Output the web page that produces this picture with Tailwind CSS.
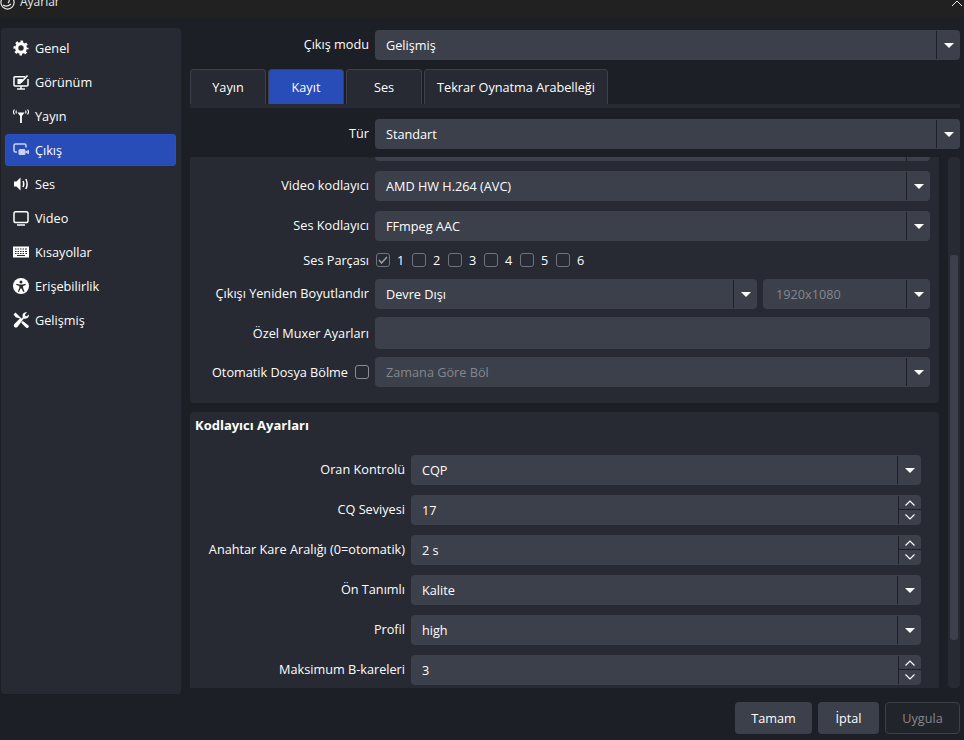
<!DOCTYPE html>
<html lang="tr">
<head>
<meta charset="UTF-8">
<title>Ayarlar</title>
<script src="https://cdn.jsdelivr.net/npm/@tailwindcss/browser@4"></script>
</head>
<body class="w-[964px] h-[740px] overflow-hidden bg-[#1d1f26] text-[#fefefe] font-['Open_Sans',sans-serif] text-[12.7px] leading-[18px]">

<!-- Title bar -->
<div class="h-[17px] bg-[#212121] flex items-start justify-between overflow-hidden pr-[2px]">
	<div class="flex items-center gap-[5px] h-[16px] -mt-[6px] shrink-0 text-[#e8e8e8] text-[12px]">
		<svg width="15" height="15" viewBox="0 0 15 15" fill="none" stroke="#e8e8e8" stroke-width="1.200"><circle cx="7.500" cy="7.500" r="6.600"/><path d="M6 1c4 2 4 5 2 7M3 10c2 1.500 5 1.500 8-1"/></svg>
		<span>Ayarlar</span>
	</div>
	<svg class="shrink-0" width="10" height="6" viewBox="0 0 10 6" fill="none" stroke="#e8e8e8" stroke-width="1"><path d="M0 6 5 1l5 5"/></svg>
</div>

<div class="flex h-[723px]">
	<!-- Sidebar -->
	<nav class="ml-[1px] mt-[11px] w-[180px] h-[666px] bg-[#272a33] rounded-[4px] pt-[4px] pl-[4px] pr-[5px] flex flex-col gap-[2px] shrink-0">
		<a class="h-[32px] pl-[8px] flex items-center gap-[6px] rounded-[3px]">
			<svg class="w-[16px] h-[16px] shrink-0" viewBox="0 0 16 16" fill="none" stroke="#fff"><circle cx="8" cy="8" r="4.300" stroke-width="3.200"/><circle cx="8" cy="8" r="6.400" stroke-width="2.200" stroke-dasharray="2.500 2.530" stroke-dashoffset="1.250"/></svg>
			<span>Genel</span>
		</a>
		<a class="h-[32px] pl-[8px] flex items-center gap-[6px] rounded-[3px]">
			<svg class="w-[16px] h-[16px] shrink-0" viewBox="0 0 16 16" fill="none" stroke="#fff" stroke-width="1.500"><path d="M12 2.800H2a1 1 0 0 0-1 1V11a1 1 0 0 0 1 1h12a1 1 0 0 0 1-1V5"/><path d="M4 15h8" stroke-width="1.400"/><path d="M8 12v3" stroke-width="1.400"/><path d="M4.500 5h5.500L7.500 10h-3z" fill="#fff" stroke="none"/><path d="M8 8.500 14.500 1.500" stroke-width="1.600"/></svg>
			<span>Görünüm</span>
		</a>
		<a class="h-[32px] pl-[8px] flex items-center gap-[6px] rounded-[3px]">
			<svg class="w-[16px] h-[16px] shrink-0" viewBox="0 0 16 16" fill="none" stroke="#fff" stroke-width="1.100"><path d="M1.500 1.500C.3 3 .3 5 1.500 6.500M14.500 1.500c1.200 1.500 1.200 3.500 0 5M3.500 2.500c-.6 1-.6 2 0 3M12.500 2.500c.6 1 .6 2 0 3"/><path d="M4.500 4.500h7L8.900 8V15H7.100V8z" fill="#fff" stroke="none"/></svg>
			<span>Yayın</span>
		</a>
		<a class="h-[32px] pl-[8px] flex items-center gap-[6px] rounded-[3px] bg-[#284cb8] border border-[#2a4fc0]">
			<svg class="w-[16px] h-[16px] shrink-0 -ml-[1px]" viewBox="0 0 16 16" fill="none" stroke="#c9d4f5" stroke-width="1.500"><path d="M13 5.500V3.500a1.500 1.500 0 0 0-1.500-1.500h-9A1.500 1.500 0 0 0 1 3.500v5A1.500 1.500 0 0 0 2.500 10H4"/><rect x="5.500" y="7" width="7" height="6" rx="1.500" fill="#c9d4f5" stroke="none"/><path d="M12.500 9.500 16 7.800v4.400l-3.500-1.700z" fill="#c9d4f5" stroke="none"/></svg>
			<span>Çıkış</span>
		</a>
		<a class="h-[32px] pl-[8px] flex items-center gap-[6px] rounded-[3px]">
			<svg class="w-[16px] h-[16px] shrink-0" viewBox="0 0 16 16" fill="none" stroke="#fff" stroke-width="1.500"><path d="M1 5.500h2.500L7.500 1.500v13l-4-4H1z" fill="#fff" stroke="none"/><path d="M10 5c.9 1.800.9 4.200 0 6M12.800 3c1.600 3 1.600 7 0 10"/></svg>
			<span>Ses</span>
		</a>
		<a class="h-[32px] pl-[8px] flex items-center gap-[6px] rounded-[3px]">
			<svg class="w-[16px] h-[16px] shrink-0" viewBox="0 0 16 16" fill="none" stroke="#fff" stroke-width="1.500"><rect x="1" y="1.800" width="14" height="10.700" rx="1.800"/><path d="M4 15h8"/></svg>
			<span>Video</span>
		</a>
		<a class="h-[32px] pl-[8px] flex items-center gap-[6px] rounded-[3px]">
			<svg class="w-[16px] h-[16px] shrink-0" viewBox="0 0 16 16"><rect y="2.500" width="16" height="11" fill="#fff"/><path d="M2 5h1.500M4.500 5H6M7 5h1.500M9.500 5H11M12 5h2M2 7.500h1.500M4.500 7.500H6M7 7.500h1.500M9.500 7.500H11M12 7.500h2M4 11.500h8M2 9.500h1.500M12.500 9.500H14M4.500 9.500H6M7 9.500h1.500M9.500 9.500H11" stroke="#272a33" stroke-width="1"/></svg>
			<span>Kısayollar</span>
		</a>
		<a class="h-[32px] pl-[8px] flex items-center gap-[6px] rounded-[3px]">
			<svg class="w-[16px] h-[16px] shrink-0" viewBox="0 0 16 16"><circle cx="8" cy="8" r="8" fill="#fff"/><circle cx="8" cy="4" r="1.500" fill="#272a33"/><path d="M3.500 5.800 6.300 6.500h3.400l2.800-.7.300 1.200-2.700 1v2l1.400 3.400-1.100.5L8.500 10.500h-1L6 13.900l-1.100-.5 1.400-3.400V8L3.200 7z" fill="#272a33"/></svg>
			<span>Erişebilirlik</span>
		</a>
		<a class="h-[32px] pl-[8px] flex items-center gap-[6px] rounded-[3px]">
			<svg class="w-[16px] h-[16px] shrink-0" viewBox="0 0 16 16" fill="#fff"><path d="M.5 2.500 2.500.5l6 6 1.300-1.200c-.6-1.600-.2-3.300 1-4.300 1-.8 2.200-1 3.300-.7L12 2.400l.3 1.500 1.500.3 2-1.800c.3 1.100 0 2.300-.8 3.200-1 1.100-2.700 1.500-4.200.9L4.400 14.900c-.8.800-2.200.8-3 0s-.8-2.200 0-3l5.500-5.300L2.800 5.300z"/><path d="M9.800 9 15.200 13.300c.8.700.8 1.700.1 2.300s-1.700.6-2.400-.1L8.200 10.700z"/></svg>
			<span>Gelişmiş</span>
		</a>
	</nav>

	<!-- Main column -->
	<div class="ml-[9px] w-[770px] flex flex-col shrink-0">
		<div class="mt-[13px] flex items-center gap-[6px]">
			<label class="w-[179px] text-right -mt-[2px]">Çıkış modu</label>
			<div class="flex-1 h-[30px] bg-[#3c404b] rounded-[4px] flex items-center pl-[11px]">
				<span class="flex-1">Gelişmiş</span>
				<div class="w-[24px] h-[28px] border-l border-[#1d1f26] flex items-center justify-center"><svg width="10" height="5" viewBox="0 0 10 5" fill="#fff"><path d="M0 0h10L5 5z"/></svg></div>
			</div>
		</div>

		<!-- Tabs -->
		<div class="mt-[9px] flex gap-[2px] h-[35px] items-end">
			<div class="w-[76px] h-[35px] bg-[#272a33] border border-b-0 border-[#3c404b] rounded-t-[4px] flex items-center justify-center">Yayın</div>
			<div class="w-[76px] h-[35px] bg-[#284cb8] border border-b-0 border-[#3c404b] rounded-t-[4px] flex items-center justify-center">Kayıt</div>
			<div class="w-[76px] h-[35px] bg-[#272a33] border border-b-0 border-[#3c404b] rounded-t-[4px] flex items-center justify-center">Ses</div>
			<div class="w-[184px] h-[35px] bg-[#272a33] border border-b-0 border-[#3c404b] rounded-t-[4px] flex items-center justify-center">Tekrar Oynatma Arabelleği</div>
		</div>
		<div class="h-[4px] bg-[#272a33]"></div>

		<div class="mt-[11px] flex items-center gap-[6px]">
			<label class="w-[179px] text-right -mt-[2px]">Tür</label>
			<div class="flex-1 h-[30px] bg-[#3c404b] rounded-[4px] flex items-center pl-[11px]">
				<span class="flex-1">Standart</span>
				<div class="w-[24px] h-[28px] border-l border-[#1d1f26] flex items-center justify-center"><svg width="10" height="5" viewBox="0 0 10 5" fill="#fff"><path d="M0 0h10L5 5z"/></svg></div>
			</div>
		</div>

		<!-- Scroll area -->
		<div class="mt-[8px] h-[531px] flex gap-[9px] overflow-hidden">
			<div class="w-[749px] shrink-0 flex flex-col gap-[9px]">
				<div class="h-[246px] bg-[#272a33] rounded-b-[4px] pr-[9px] shrink-0 overflow-hidden">
					<div class="ml-[185px] h-[4px] bg-[#3c404b] rounded-b-[4px] flex justify-end"><div class="w-[24px] border-l border-[#1d1f26]"></div></div>

					<div class="mt-[10px] flex items-center gap-[6px]">
						<label class="w-[179px] text-right -mt-[2px]">Video kodlayıcı</label>
						<div class="flex-1 h-[30px] bg-[#3c404b] rounded-[4px] flex items-center pl-[11px]">
							<span class="flex-1">AMD HW H.264 (AVC)</span>
							<div class="w-[24px] h-[28px] border-l border-[#1d1f26] flex items-center justify-center"><svg width="10" height="5" viewBox="0 0 10 5" fill="#fff"><path d="M0 0h10L5 5z"/></svg></div>
						</div>
					</div>

					<div class="mt-[10px] flex items-center gap-[6px]">
						<label class="w-[179px] text-right -mt-[2px]">Ses Kodlayıcı</label>
						<div class="flex-1 h-[30px] bg-[#3c404b] rounded-[4px] flex items-center pl-[11px]">
							<span class="flex-1">FFmpeg AAC</span>
							<div class="w-[24px] h-[28px] border-l border-[#1d1f26] flex items-center justify-center"><svg width="10" height="5" viewBox="0 0 10 5" fill="#fff"><path d="M0 0h10L5 5z"/></svg></div>
						</div>
					</div>

					<div class="mt-[11px] h-[16px] flex items-center gap-[6px]">
						<label class="w-[179px] text-right -mt-[1px]">Ses Parçası</label>
						<div class="flex items-center pl-[1px]">
							<span class="w-[14px] h-[14px] border border-[#70737c] rounded-[3px] flex items-center justify-center"><svg width="10" height="8" viewBox="0 0 10 8" fill="none" stroke="#9a9da4" stroke-width="1.500"><path d="M1 4l2.500 3L9 1"/></svg></span>
							<span class="w-[22px] pl-[7px]">1</span>
							<span class="w-[14px] h-[14px] border border-[#70737c] rounded-[3px]"></span>
							<span class="w-[22px] pl-[7px]">2</span>
							<span class="w-[14px] h-[14px] border border-[#70737c] rounded-[3px]"></span>
							<span class="w-[22px] pl-[7px]">3</span>
							<span class="w-[14px] h-[14px] border border-[#70737c] rounded-[3px]"></span>
							<span class="w-[22px] pl-[7px]">4</span>
							<span class="w-[14px] h-[14px] border border-[#70737c] rounded-[3px]"></span>
							<span class="w-[22px] pl-[7px]">5</span>
							<span class="w-[14px] h-[14px] border border-[#70737c] rounded-[3px]"></span>
							<span class="w-[22px] pl-[7px]">6</span>
						</div>
					</div>

					<div class="mt-[11px] flex items-center gap-[6px]">
						<label class="w-[179px] text-right -mt-[2px]">Çıkışı Yeniden Boyutlandır</label>
						<div class="w-[382px] h-[30px] bg-[#3c404b] rounded-[4px] flex items-center pl-[11px]">
							<span class="flex-1">Devre Dışı</span>
							<div class="w-[24px] h-[28px] border-l border-[#1d1f26] flex items-center justify-center"><svg width="10" height="5" viewBox="0 0 10 5" fill="#fff"><path d="M0 0h10L5 5z"/></svg></div>
						</div>
						<div class="flex-1 h-[30px] bg-[#3c404b] rounded-[4px] flex items-center pl-[13px] text-[#85878e]">
							<span class="flex-1">1920x1080</span>
							<div class="w-[24px] h-[28px] border-l border-[#1d1f26] flex items-center justify-center"><svg width="10" height="5" viewBox="0 0 10 5" fill="#fff"><path d="M0 0h10L5 5z"/></svg></div>
						</div>
					</div>

					<div class="mt-[8px] flex items-center gap-[6px]">
						<label class="w-[179px] text-right">Özel Muxer Ayarları</label>
						<div class="flex-1 h-[32px] bg-[#3c404b] rounded-[4px]"></div>
					</div>

					<div class="mt-[8px] flex items-center gap-[6px]">
						<div class="w-[179px] flex items-center justify-end gap-[7px]">
							<label>Otomatik Dosya Bölme</label>
							<span class="w-[14px] h-[14px] border border-[#8a8c93] rounded-[3px]"></span>
						</div>
						<div class="flex-1 h-[30px] bg-[#3c404b] rounded-[4px] flex items-center pl-[11px] text-[#85878e]">
							<span class="flex-1">Zamana Göre Böl</span>
							<div class="w-[24px] h-[28px] border-l border-[#1d1f26] flex items-center justify-center"><svg width="10" height="5" viewBox="0 0 10 5" fill="#fff"><path d="M0 0h10L5 5z"/></svg></div>
						</div>
					</div>
				</div>

				<div class="h-[276px] bg-[#272a33] rounded-t-[4px] pr-[18px] shrink-0 overflow-hidden">
					<h3 class="pl-[5px] pt-[4px] h-[43px] font-bold text-[13px]">Kodlayıcı Ayarları</h3>

					<div class="flex items-center gap-[6px]">
						<label class="w-[215px] text-right -mt-[2px]">Oran Kontrolü</label>
						<div class="flex-1 h-[30px] bg-[#3c404b] rounded-[4px] flex items-center pl-[11px]">
							<span class="flex-1">CQP</span>
							<div class="w-[24px] h-[28px] border-l border-[#1d1f26] flex items-center justify-center"><svg width="10" height="5" viewBox="0 0 10 5" fill="#fff"><path d="M0 0h10L5 5z"/></svg></div>
						</div>
					</div>

					<div class="mt-[10px] flex items-center gap-[6px]">
						<label class="w-[215px] text-right -mt-[2px]">CQ Seviyesi</label>
						<div class="flex-1 h-[30px] bg-[#3c404b] rounded-[4px] flex items-center pl-[11px]">
							<span class="flex-1">17</span>
							<div class="w-[23px] h-[28px] border-l border-[#1d1f26] flex flex-col">
								<div class="h-[14px] flex items-center justify-center border-b border-[#1d1f26]"><svg width="10" height="6" viewBox="0 0 10 6" fill="none" stroke="#fff" stroke-width="1.200"><path d="M.5 5.500 5 1l4.500 4.500"/></svg></div>
								<div class="h-[14px] flex items-center justify-center"><svg width="10" height="6" viewBox="0 0 10 6" fill="none" stroke="#fff" stroke-width="1.200"><path d="M.5.500 5 5 9.500.5"/></svg></div>
							</div>
						</div>
					</div>

					<div class="mt-[10px] flex items-center gap-[6px]">
						<label class="w-[215px] text-right -mt-[2px]">Anahtar Kare Aralığı (0=otomatik)</label>
						<div class="flex-1 h-[30px] bg-[#3c404b] rounded-[4px] flex items-center pl-[11px]">
							<span class="flex-1">2 s</span>
							<div class="w-[23px] h-[28px] border-l border-[#1d1f26] flex flex-col">
								<div class="h-[14px] flex items-center justify-center border-b border-[#1d1f26]"><svg width="10" height="6" viewBox="0 0 10 6" fill="none" stroke="#fff" stroke-width="1.200"><path d="M.5 5.500 5 1l4.500 4.500"/></svg></div>
								<div class="h-[14px] flex items-center justify-center"><svg width="10" height="6" viewBox="0 0 10 6" fill="none" stroke="#fff" stroke-width="1.200"><path d="M.5.500 5 5 9.500.5"/></svg></div>
							</div>
						</div>
					</div>

					<div class="mt-[10px] flex items-center gap-[6px]">
						<label class="w-[215px] text-right -mt-[2px]">Ön Tanımlı</label>
						<div class="flex-1 h-[30px] bg-[#3c404b] rounded-[4px] flex items-center pl-[11px]">
							<span class="flex-1">Kalite</span>
							<div class="w-[24px] h-[28px] border-l border-[#1d1f26] flex items-center justify-center"><svg width="10" height="5" viewBox="0 0 10 5" fill="#fff"><path d="M0 0h10L5 5z"/></svg></div>
						</div>
					</div>

					<div class="mt-[10px] flex items-center gap-[6px]">
						<label class="w-[215px] text-right -mt-[2px]">Profil</label>
						<div class="flex-1 h-[30px] bg-[#3c404b] rounded-[4px] flex items-center pl-[11px]">
							<span class="flex-1">high</span>
							<div class="w-[24px] h-[28px] border-l border-[#1d1f26] flex items-center justify-center"><svg width="10" height="5" viewBox="0 0 10 5" fill="#fff"><path d="M0 0h10L5 5z"/></svg></div>
						</div>
					</div>

					<div class="mt-[10px] flex items-center gap-[6px]">
						<label class="w-[215px] text-right -mt-[2px]">Maksimum B-kareleri</label>
						<div class="flex-1 h-[30px] bg-[#3c404b] rounded-[4px] flex items-center pl-[11px]">
							<span class="flex-1">3</span>
							<div class="w-[23px] h-[28px] border-l border-[#1d1f26] flex flex-col">
								<div class="h-[14px] flex items-center justify-center border-b border-[#1d1f26]"><svg width="10" height="6" viewBox="0 0 10 6" fill="none" stroke="#fff" stroke-width="1.200"><path d="M.5 5.500 5 1l4.500 4.500"/></svg></div>
								<div class="h-[14px] flex items-center justify-center"><svg width="10" height="6" viewBox="0 0 10 6" fill="none" stroke="#fff" stroke-width="1.200"><path d="M.5.500 5 5 9.500.5"/></svg></div>
							</div>
						</div>
					</div>
				</div>
			</div>

			<!-- Scrollbar -->
			<div class="w-[12px] h-[531px] bg-[#272a33] rounded-[4px] px-[2px] pt-[98px] shrink-0">
				<div class="h-[385px] bg-[#3c404b] rounded-[3px]"></div>
			</div>
		</div>

		<!-- Footer buttons -->
		<div class="mt-[14px] flex justify-end gap-[6px]">
			<button class="w-[77px] h-[32px] bg-[#3c404b] rounded-[4px]">Tamam</button>
			<button class="w-[61px] h-[32px] bg-[#3c404b] rounded-[4px]">İptal</button>
			<button class="w-[75px] h-[32px] bg-[#22242c] border border-[#3c404b] rounded-[4px] text-[#85878e]">Uygula</button>
		</div>
	</div>
</div>
</body>
</html>
